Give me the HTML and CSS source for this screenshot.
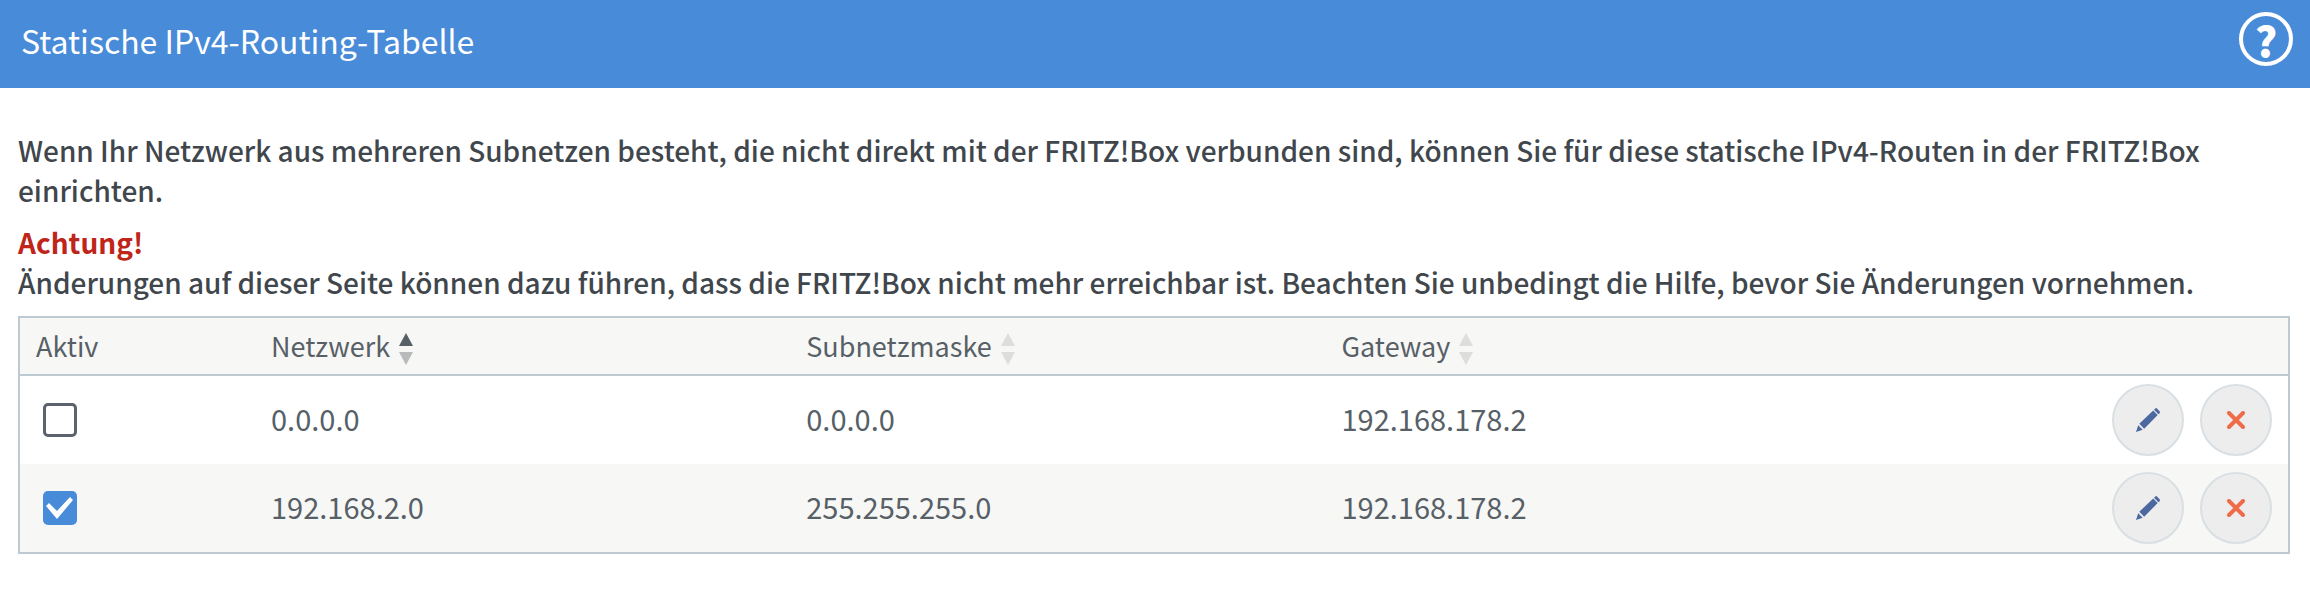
FILE: index.html
```
<!DOCTYPE html>
<html lang="de">
<head>
    <meta charset="UTF-8">
    <meta name="viewport" content="width=device-width, initial-scale=1.0">
    <title>Statische IPv4-Routing-Tabelle</title>
    <link rel="stylesheet" href="styles.css">
</head>
<body>
    <!-- Icons shared by the table -->
    <svg class="sprite" aria-hidden="true">
        <symbol id="icon-edit" viewBox="0 0 24 24">
            <path d="M19.300 0.500 L20.500 0 L24 3.800 L23.700 5.200 L22.500 6.200 L18 1.700 Z"/>
            <path d="M17.200 2.500 L21.700 7 L8.200 20.700 L3.300 15.800 Z"/>
            <path d="M2.200 17.200 L6.700 21.700 L0 24 Z"/>
        </symbol>
        <symbol id="icon-delete" viewBox="0 0 18 18">
            <path d="M2 2 L16 16 M16 2 L2 16" fill="none" stroke="currentColor" stroke-width="4" stroke-linecap="round"/>
        </symbol>
    </svg>

    <header class="header">
        <h1>Statische IPv4-Routing-Tabelle</h1>
        <button class="help" type="button" title="Hilfe">?</button>
    </header>

    <main class="content">
        <p>Wenn Ihr Netzwerk aus mehreren Subnetzen besteht, die nicht direkt mit der FRITZ!Box verbunden sind, können Sie für diese statische IPv4-Routen in der FRITZ!Box einrichten.</p>
        <p><strong class="warning">Achtung!</strong><br>Änderungen auf dieser Seite können dazu führen, dass die FRITZ!Box nicht mehr erreichbar ist. Beachten Sie unbedingt die Hilfe, bevor Sie Änderungen vornehmen.</p>

        <table class="routes">
            <thead>
                <tr>
                    <th class="col-active">Aktiv</th>
                    <th class="col-net" aria-sort="ascending">
                        <button class="sort sort-asc" type="button">Netzwerk
                            <svg width="14" height="32" viewBox="0 0 14 32"><path class="up" d="M7 0 L14 13 H0 Z"/><path class="down" d="M0 19 H14 L7 32 Z"/></svg>
                        </button>
                    </th>
                    <th class="col-net">
                        <button class="sort" type="button">Subnetzmaske
                            <svg width="14" height="32" viewBox="0 0 14 32"><path class="up" d="M7 0 L14 13 H0 Z"/><path class="down" d="M0 19 H14 L7 32 Z"/></svg>
                        </button>
                    </th>
                    <th>
                        <button class="sort" type="button">Gateway
                            <svg width="14" height="32" viewBox="0 0 14 32"><path class="up" d="M7 0 L14 13 H0 Z"/><path class="down" d="M0 19 H14 L7 32 Z"/></svg>
                        </button>
                    </th>
                    <td class="col-actions"></td>
                </tr>
            </thead>
            <tbody>
                <tr>
                    <td><input type="checkbox" aria-label="Route 0.0.0.0 aktiv"></td>
                    <td class="addr">0.0.0.0</td>
                    <td class="addr">0.0.0.0</td>
                    <td class="addr">192.168.178.2</td>
                    <td>
                        <div class="actions">
                            <button class="round edit" type="button" title="Bearbeiten"><svg width="24" height="24"><use href="#icon-edit"/></svg></button>
                            <button class="round delete" type="button" title="Löschen"><svg width="18" height="18"><use href="#icon-delete"/></svg></button>
                        </div>
                    </td>
                </tr>
                <tr>
                    <td><input type="checkbox" aria-label="Route 192.168.2.0 aktiv" checked></td>
                    <td class="addr">192.168.2.0</td>
                    <td class="addr">255.255.255.0</td>
                    <td class="addr">192.168.178.2</td>
                    <td>
                        <div class="actions">
                            <button class="round edit" type="button" title="Bearbeiten"><svg width="24" height="24"><use href="#icon-edit"/></svg></button>
                            <button class="round delete" type="button" title="Löschen"><svg width="18" height="18"><use href="#icon-delete"/></svg></button>
                        </div>
                    </td>
                </tr>
            </tbody>
        </table>
    </main>
</body>
</html>
```
FILE: styles.css
```
* {
    box-sizing: border-box;
}
body {
    margin: 0;
    background: #fff;
    color: #3f464c;
    font-family: "Noto Sans CJK JP", "Noto Sans", sans-serif;
    font-size: 28px;
    font-weight: 500;
    line-height: 40px;
}
button {
    padding: 0;
    border: none;
    background: none;
    color: inherit;
    font: inherit;
    cursor: pointer;
}
.sprite {
    display: none;
}
.header {
    display: flex;
    justify-content: space-between;
    align-items: center;
    height: 88px;
    padding: 0 17px 10px 21px;
    background: #488bd9;
    color: #fff;
}
.header h1 {
    margin: 2px 0 0;
    font-size: 32px;
    font-weight: 400;
}
.help {
    width: 54px;
    height: 54px;
    border: 4px solid #fff;
    border-radius: 50%;
    font-size: 42px;
    font-weight: 900;
    line-height: 44px;
}
.content {
    padding: 42px 20px 40px 18px;
}
.content p {
    margin: 0 0 12px;
}
.warning {
    color: #bf2519;
    font-weight: 700;
}
.routes {
    width: 100%;
    margin-top: 14px;
    table-layout: fixed;
    border: 2px solid #bdcad2;
    border-spacing: 0;
    color: #575f67;
}
.routes th, .routes td {
    padding: 8px 16px;
    text-align: left;
    font-weight: 400;
}
.routes th {
    font-size: 27px;
}
.routes thead th, .routes thead td {
    border-bottom: 2px solid #bdcad2;
    background: #f7f7f5;
}
.routes tbody tr:nth-child(even) {
    background: #f7f7f5;
}
.routes .addr {
    padding-bottom: 12px;
    font-size: 29px;
}
.col-active {
    width: 235px;
}
.col-net {
    width: 23.6%;
}
.col-actions {
    width: 192px;
}
.sort {
    display: flex;
    align-items: center;
    gap: 9px;
}
.sort svg {
    margin-top: 6px;
    fill: #dcdddc;
}
.sort-asc .up {
    fill: #575f67;
}
.sort-asc .down {
    fill: #b9babc;
}
input[type="checkbox"] {
    display: block;
    appearance: none;
    width: 34px;
    height: 34px;
    margin: 0 0 0 7px;
    border: 3px solid #5c636d;
    border-radius: 5px;
    background: #fff;
}
input[type="checkbox"]:checked {
    border: none;
    background: #488bd9;
}
input[type="checkbox"]:checked::before {
    content: "";
    display: block;
    width: 34px;
    height: 34px;
    background: #fff;
    clip-path: polygon(3px 15px, 6px 12px, 14px 20px, 27px 6px, 30px 9px, 14px 28px);
}
.actions {
    display: flex;
    justify-content: flex-end;
    gap: 16px;
}
.round {
    display: flex;
    flex: none;
    justify-content: center;
    align-items: center;
    width: 72px;
    height: 72px;
    border: 2px solid #d9dfe3;
    border-radius: 50%;
    background: #ededed;
}
.edit {
    color: #4b69a0;
    fill: currentColor;
}
.delete {
    color: #f06c48;
}
```
